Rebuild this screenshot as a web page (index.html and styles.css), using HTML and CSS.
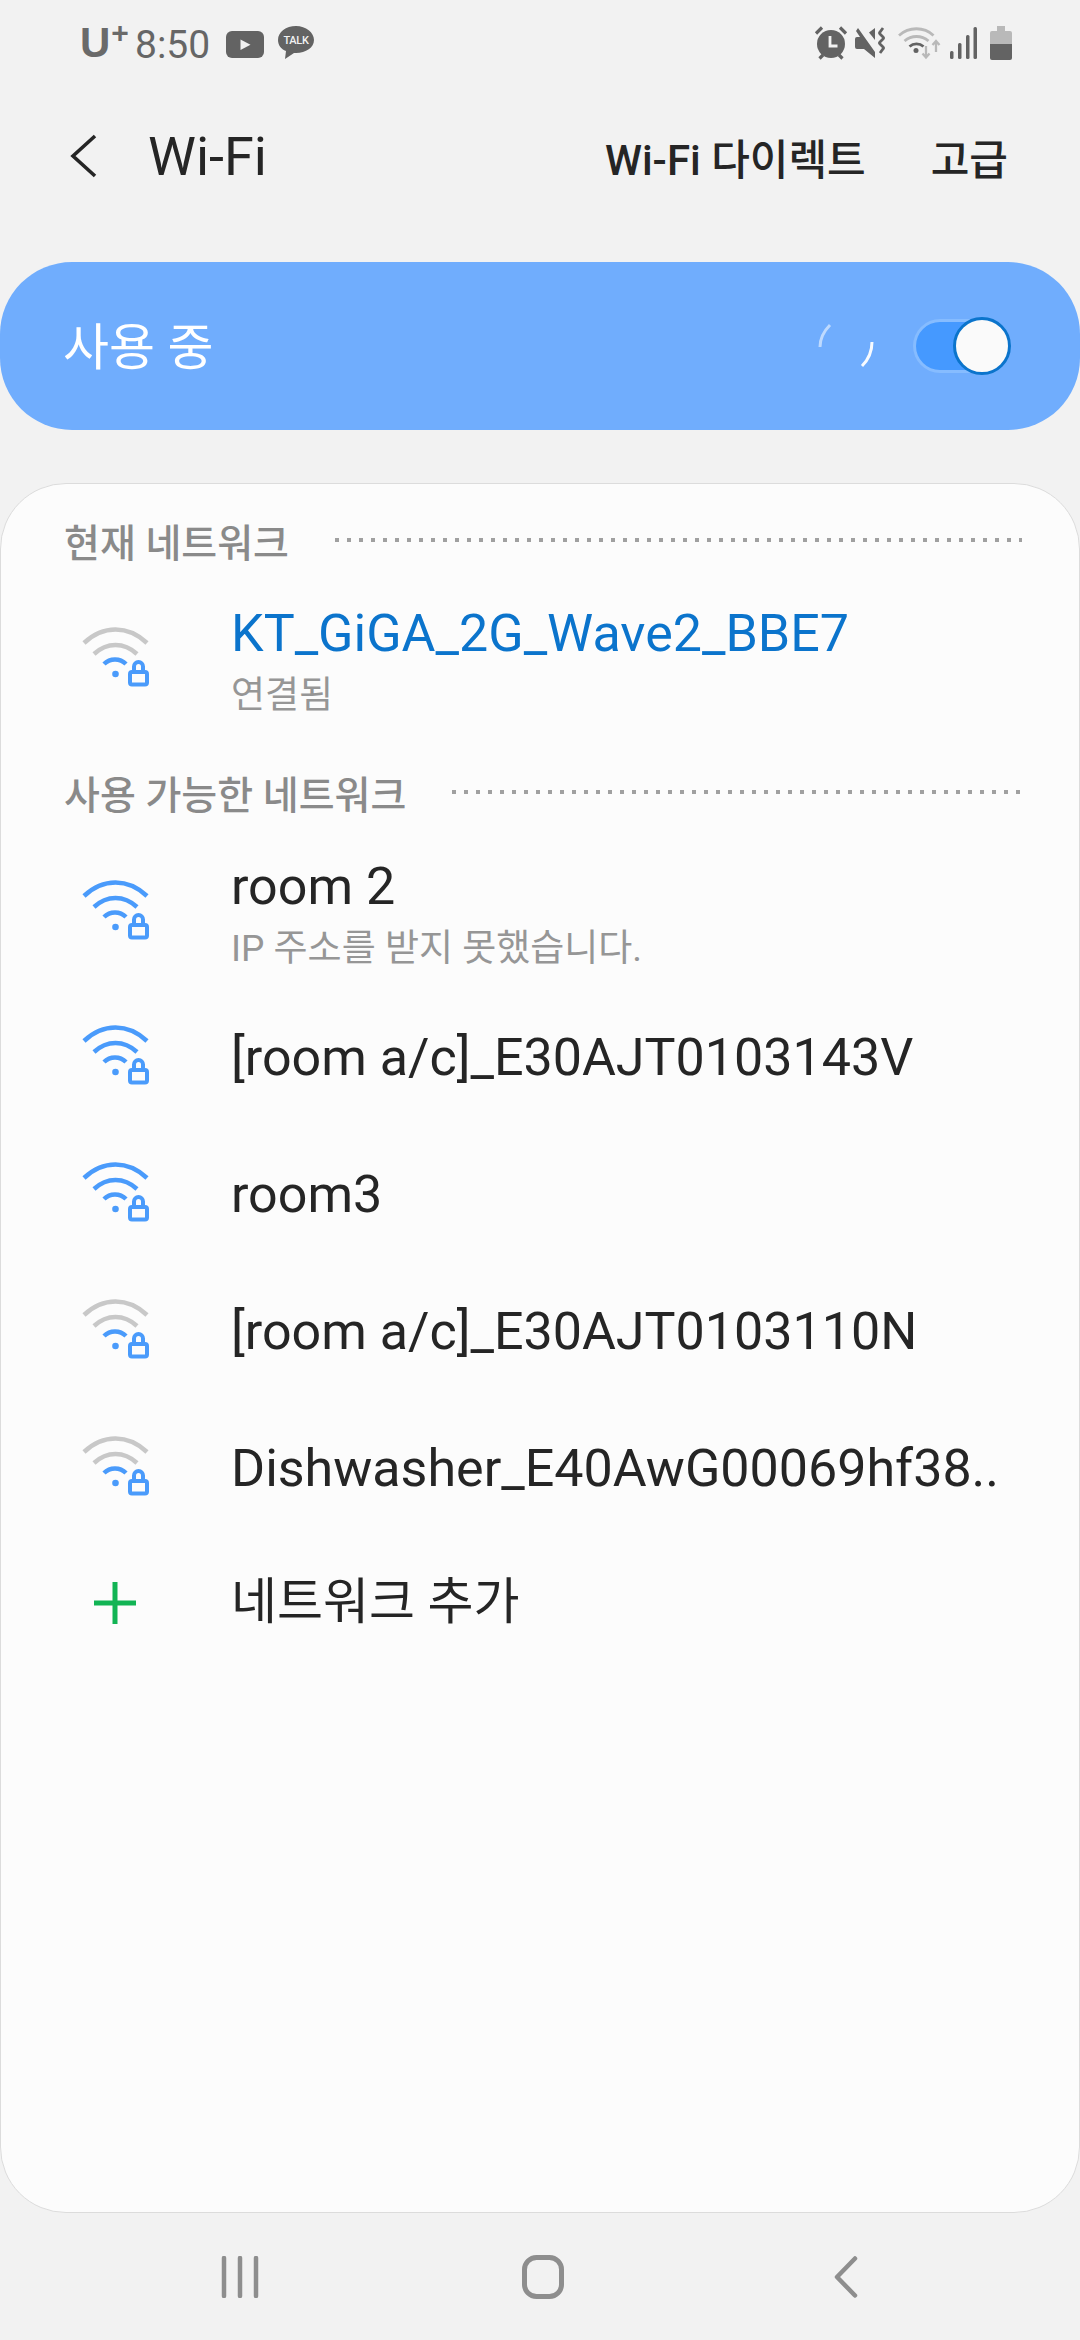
FILE: index.html
```html
<!DOCTYPE html>
<html lang="ko">
<head>
<meta charset="utf-8">
<title>Wi-Fi</title>
<link rel="stylesheet" href="styles.css">
</head>
<body>
<svg class="defs" width="0" height="0">
  <symbol id="lock" viewBox="20 15 72 68">
    <path d="M74 64v-5.500a4.500 4.500 0 0 1 9 0V64" fill="none" stroke="currentColor" stroke-width="4"/>
    <rect x="70" y="64" width="17" height="12.500" rx="2" fill="none" stroke="currentColor" stroke-width="4"/>
    <circle cx="55.500" cy="66" r="3.300" fill="currentColor"/>
  </symbol>
</svg>
<div class="screen">
  <header class="status">
    <div class="status-left">
      <span class="carrier">U<sup class="plus">+</sup></span>
      <span class="clock">8:50</span>
      <svg class="yt" viewBox="0 0 38 27"><rect width="38" height="27" rx="6" fill="#636363"/><path d="M14.500 8.500v10.500l10-5.200z" fill="#f2f2f2"/></svg>
      <span class="talk"><svg class="talk-bg" viewBox="0 0 36 34"><path d="M18 0C8 0 0 6 0 14c0 5 3 9 8 11l-1 8 9-6h2c10 0 18-5.500 18-13S28 0 18 0z" fill="#636363"/></svg><span class="talk-text">TALK</span></span>
    </div>
    <div class="status-right">
      <svg class="st-alarm" viewBox="0 0 34 34"><circle cx="17" cy="18" r="14" fill="#636363"/><path d="M2 7.500 8 1.500M26 1.500l6 6M5.500 32.500 9 29M28.500 32.500 25 29" stroke="#636363" stroke-width="3.200" fill="none"/><path d="M16 10v10h7.500" stroke="#f2f2f2" stroke-width="2.800" fill="none"/></svg>
      <svg class="st-mute" viewBox="4 7 32 32"><path d="M7 8 24 32v6L13 29H6a2 2 0 0 1-2-2v-8a2 2 0 0 1 2-2h3l-4-6z" fill="#636363"/><path d="M18 12.500 24 8v12z" fill="#636363"/><path d="M32 8l-3 4q-1 1 0 2l3 3q1 1 0 2l-3 3q-1 1 0 2l3 3q1 1 0 2l-3 4" stroke="#636363" stroke-width="2.800" fill="none"/></svg>
      <svg class="st-wifi" viewBox="0 0 43 34"><path d="M1 9.500C11 .5 26 .5 35.500 9.500M6.500 15c7-6 17-6 24 0" stroke="#b9b9b9" stroke-width="2.800" fill="none"/><path d="M11.500 20.500c4-3.500 10-3.500 14 0" stroke="#636363" stroke-width="2.800" fill="none"/><circle cx="18" cy="24.500" r="2.500" fill="#636363"/><path d="M28 20v11M24.500 27.500l3.500 4 3.500-4M38 26V15M34.500 19l3.500-4 3.500 4" stroke="#b9b9b9" stroke-width="2.300" fill="none"/></svg>
      <svg class="st-signal" viewBox="0 0 27 32"><rect y="24" width="3.500" height="8" rx="1.500" fill="#636363"/><rect x="8" y="16" width="3.500" height="16" rx="1.500" fill="#636363"/><rect x="16" y="8" width="3.500" height="24" rx="1.500" fill="#636363"/><rect x="23.500" width="3.500" height="32" rx="1.500" fill="#636363"/></svg>
      <svg class="st-batt" viewBox="0 0 22 34"><path d="M7 0h8v5h5a2 2 0 0 1 2 2v12H0V7a2 2 0 0 1 2-2h5z" fill="#b9b9b9"/><path d="M0 18h22v14a2 2 0 0 1-2 2H2a2 2 0 0 1-2-2z" fill="#636363"/></svg>
    </div>
  </header>

  <nav class="toolbar">
    <svg class="back" viewBox="0 0 27 44"><path d="M25 2 3 22l22 20" fill="none" stroke="#252525" stroke-width="3.600"/></svg>
    <h1 class="title">Wi-Fi</h1>
    <span class="action action-direct">Wi-Fi 다이렉트</span>
    <span class="action">고급</span>
  </nav>

  <section class="banner">
    <span class="banner-label">사용 중</span>
    <svg class="spinner" viewBox="0 0 56 46"><path d="M2 24C2 16 5 9 12 2" fill="none" stroke="#fff" stroke-opacity=".55" stroke-width="3"/><path d="M54 19c0 9-3 17-10 24" fill="none" stroke="#fff" stroke-opacity=".95" stroke-width="3"/></svg>
    <span class="switch"><span class="switch-thumb"></span></span>
  </section>

  <main class="card">
    <div class="head"><span class="head-label">현재 네트워크</span><span class="dots"></span></div>
    <div class="row row-two row-current">
      <svg class="wifi" viewBox="20 15 72 68"><path d="M24 35c19-18 44-18 63 0M34 46c13-12 30-12 43 0" fill="none" stroke="#c8c8c8" stroke-width="4.500"/><path d="M44 56c6-6 16-6 22 0" fill="none" stroke="#4a9bfb" stroke-width="4.500"/><use href="#lock" x="20" y="15" width="72" height="68" class="lock-blue"/></svg>
      <div class="text"><div class="name name-current">KT_GiGA_2G_Wave2_BBE7</div><div class="sub">연결됨</div></div>
    </div>
    <div class="head"><span class="head-label">사용 가능한 네트워크</span><span class="dots"></span></div>
    <div class="row row-two">
      <svg class="wifi" viewBox="20 15 72 68"><path d="M24 35c19-18 44-18 63 0M34 46c13-12 30-12 43 0M44 56c6-6 16-6 22 0" fill="none" stroke="#4a9bfb" stroke-width="4.500"/><use href="#lock" x="20" y="15" width="72" height="68" class="lock-blue"/></svg>
      <div class="text"><div class="name">room 2</div><div class="sub">IP 주소를 받지 못했습니다.</div></div>
    </div>
    <div class="row">
      <svg class="wifi" viewBox="20 15 72 68"><path d="M24 35c19-18 44-18 63 0M34 46c13-12 30-12 43 0M44 56c6-6 16-6 22 0" fill="none" stroke="#4a9bfb" stroke-width="4.500"/><use href="#lock" x="20" y="15" width="72" height="68" class="lock-blue"/></svg>
      <div class="name">[room a/c]_E30AJT0103143V</div>
    </div>
    <div class="row">
      <svg class="wifi" viewBox="20 15 72 68"><path d="M24 35c19-18 44-18 63 0M34 46c13-12 30-12 43 0M44 56c6-6 16-6 22 0" fill="none" stroke="#4a9bfb" stroke-width="4.500"/><use href="#lock" x="20" y="15" width="72" height="68" class="lock-blue"/></svg>
      <div class="name">room3</div>
    </div>
    <div class="row">
      <svg class="wifi" viewBox="20 15 72 68"><path d="M24 35c19-18 44-18 63 0M34 46c13-12 30-12 43 0" fill="none" stroke="#c8c8c8" stroke-width="4.500"/><path d="M44 56c6-6 16-6 22 0" fill="none" stroke="#4a9bfb" stroke-width="4.500"/><use href="#lock" x="20" y="15" width="72" height="68" class="lock-blue"/></svg>
      <div class="name">[room a/c]_E30AJT0103110N</div>
    </div>
    <div class="row">
      <svg class="wifi" viewBox="20 15 72 68"><path d="M24 35c19-18 44-18 63 0M34 46c13-12 30-12 43 0" fill="none" stroke="#c8c8c8" stroke-width="4.500"/><path d="M44 56c6-6 16-6 22 0" fill="none" stroke="#4a9bfb" stroke-width="4.500"/><use href="#lock" x="20" y="15" width="72" height="68" class="lock-blue"/></svg>
      <div class="name">Dishwasher_E40AwG00069hf38..</div>
    </div>
    <div class="row row-add">
      <svg class="plus-icon" viewBox="0 0 42 42"><path d="M21 0v42M0 21h42" stroke="#12b454" stroke-width="5" fill="none"/></svg>
      <div class="name name-add">네트워크 추가</div>
    </div>
  </main>

  <footer class="navbar">
    <svg class="nav-recent" viewBox="0 0 38 42"><path d="M3 2v38M19 2v38M35 2v38" stroke="#8e8e8e" stroke-width="4.500" stroke-linecap="round" fill="none"/></svg>
    <svg class="nav-home" viewBox="0 0 42 44"><rect x="2.500" y="2.500" width="37" height="39" rx="12" fill="none" stroke="#8e8e8e" stroke-width="5"/></svg>
    <svg class="nav-back" viewBox="0 0 24 42"><path d="M21 2.500 3 21l18 18.500" stroke="#8e8e8e" stroke-width="4.500" stroke-linecap="round" stroke-linejoin="round" fill="none"/></svg>
  </footer>
</div>
</body>
</html>
```
FILE: styles.css
```css
* { box-sizing: border-box; }
html, body { margin: 0; padding: 0; }
body { background: #f2f2f2; font-family: Roboto, "Noto Sans CJK KR", sans-serif; }
.defs { display: block; height: 0; width: 0; }
.lock-blue { color: #4a9bfb; }
.screen { width: 1080px; height: 2340px; display: flex; flex-direction: column; overflow: hidden; }

.status { height: 80px; padding: 26px 68px 0 80px; display: flex; justify-content: space-between; align-items: flex-start; flex: none; }
.status-left, .status-right { display: flex; align-items: center; height: 34px; }
.carrier { width: 55px; font: 700 42px/34px "Liberation Sans", sans-serif; color: #6a6a6a; display: flex; }
.plus { font-size: 30px; line-height: 22px; margin-left: 1px; margin-top: -4px; vertical-align: top; }
.clock { font-size: 39px; line-height: 34px; color: #666; width: 91px; margin-top: 3px; }
.yt { width: 38px; height: 27px; margin-right: 14px; margin-top: 2px; }
.talk { width: 36px; height: 34px; display: flex; align-items: center; justify-content: center; position: relative; }
.talk-bg { position: absolute; inset: 0; width: 36px; height: 34px; }
.talk-text { position: relative; font: 500 11px/12px Roboto, sans-serif; color: #f2f2f2; margin-top: -5px; letter-spacing: -.3px; }
.st-alarm { width: 34px; height: 34px; margin-right: 7px; }
.st-mute { width: 32px; height: 32px; margin-right: 11px; }
.st-wifi { width: 43px; height: 34px; margin-right: 9px; }
.st-signal { width: 27px; height: 32px; margin-right: 13px; }
.st-batt { width: 22px; height: 34px; }

.toolbar { height: 152px; padding: 0 72px 0 70px; display: flex; align-items: center; flex: none; }
.back { width: 27px; height: 44px; margin-right: 51px; }
.title { margin: 0; flex: 1; font-size: 54px; font-weight: 400; color: #252525; }
.action { font-size: 42px; font-weight: 500; color: #252525; }
.action-direct { margin-right: 65px; }

.banner { height: 168px; margin-top: 30px; border-radius: 72px; background: #70adfd; display: flex; align-items: center; padding: 0 69px 0 63px; flex: none; }
.banner-label { flex: 1; font-size: 50px; color: #fff; margin-bottom: 6px; }
.spinner { width: 56px; height: 46px; margin-right: 39px; }
.switch { width: 98px; height: 54px; border-radius: 27px; background: #4599ff; border: 3px solid rgba(255,255,255,.35); display: flex; align-items: center; justify-content: flex-end; }
.switch-thumb { width: 58px; height: 58px; flex: none; margin: -3px -3px -3px 0; border-radius: 50%; background: #fafafa; border: 3px solid #0b74cc; }

.card { height: 1730px; margin-top: 53px; background: #fcfcfc; border: 1px solid #dcdcdc; border-radius: 66px; padding: 34px 57px 0 0; flex: none; }
.head { height: 44px; display: flex; align-items: center; gap: 46px; padding-left: 63px; }
.head-label { font-size: 39px; font-weight: 500; color: #8a8a8a; white-space: nowrap; }
.dots { flex: 1; height: 4px; background: repeating-linear-gradient(90deg, #a0a0a0 0 4px, transparent 4px 12px); }
.row { height: 137px; display: flex; align-items: center; padding-left: 79px; }
.row-two { height: auto; padding-top: 40px; padding-bottom: 12px; }
.row-current { padding-top: 39px; padding-bottom: 11px; margin-bottom: 34px; }
.row-add { height: 130px; }
.wifi { width: 72px; height: 68px; flex: none; margin-right: 79px; margin-bottom: 8px; }
.row-two .wifi { margin-bottom: 12px; }
.text { display: flex; flex-direction: column; }
.name { font-size: 52px; line-height: 66px; color: #252525; white-space: nowrap; margin-bottom: 2px; }
.text .name { margin-bottom: 0; }
.name-current { color: #0b74cc; }
.name-add { font-size: 50px; }
.sub { font-size: 37px; line-height: 58px; color: #969696; }
.plus-icon { width: 42px; height: 42px; flex: none; margin-left: 14px; margin-right: 95px; }

.navbar { height: 127px; flex: none; display: flex; align-items: center; padding-left: 221px; }
.nav-recent { width: 38px; height: 42px; margin-right: 263px; }
.nav-home { width: 42px; height: 44px; margin-right: 270px; }
.nav-back { width: 24px; height: 42px; }
```
